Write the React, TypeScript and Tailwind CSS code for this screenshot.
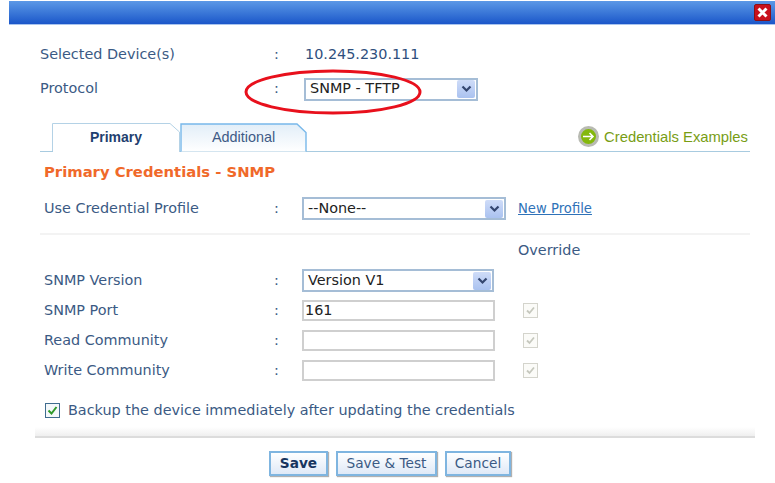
import React from "react";

const Arrow = () => (
  <span className="flex h-[18px] w-[18px] items-center justify-center rounded-[2px] bg-gradient-to-b from-[#cfdcf8] to-[#aac2f0]">
    <svg width="11" height="8" viewBox="0 0 11 8">
      <path d="M1.5 1.5 L5.5 5.5 L9.5 1.5" fill="none" stroke="#34466f" strokeWidth="2.2" />
    </svg>
  </span>
);

const Select = ({ value, className }: { value: string; className: string }) => (
  <div className={`flex h-[23px] items-center justify-between border-2 border-[#a5bdd6] bg-white pl-[4px] pr-[1px] text-[14.4px] text-[#222222] ${className}`}>
    <span>{value}</span>
    <Arrow />
  </div>
);

const Input = ({ value = "" }: { value?: string }) => (
  <div className="flex h-[21px] w-[193px] items-center border-2 border-[#cfcfcf] bg-white pl-[1px] text-[14.4px] text-[#222222]">{value}</div>
);

const Check = () => (
  <span className="flex h-[15px] w-[15px] items-center justify-center border border-[#d4d4cc] bg-[#fbfbf8]">
    <svg width="11" height="11" viewBox="0 0 11 11">
      <path d="M2 5.5 L4.5 8 L9 2.5" fill="none" stroke="#c6c8be" strokeWidth="1.8" />
    </svg>
  </span>
);

const Row = ({ label, children, cls }: { label: string; children: React.ReactNode; cls: string }) => (
  <div className={`flex items-center pl-[44px] ${cls}`}>
    <span className="w-[230px]">{label}</span>
    <span className="w-[28px]">:</span>
    {children}
  </div>
);

export default function App() {
  return (
    <div className="relative h-[483px] w-[775px] overflow-hidden bg-white font-['DejaVu_Sans','Liberation_Sans',sans-serif] text-[14.4px] text-[#3b5a84]">
      <div className="ml-[9px] mt-[1px] flex h-[24px] items-start justify-end border-b border-[#a9c4ee] bg-gradient-to-b from-[#5c98e6] to-[#1b56c9] pr-[4px] pt-[3px]">
        <span className="flex h-[17px] w-[17px] items-center justify-center rounded-[2px] border border-[#8a1015] bg-[#c8101c]">
          <svg width="13" height="13" viewBox="0 0 13 13">
            <path d="M2.5 2.5 L10.5 10.5 M10.5 2.5 L2.5 10.5" stroke="#ffffff" strokeWidth="3" />
          </svg>
        </span>
      </div>

      <div className="flex h-[34px] mt-[13px] items-center pl-[40px]">
        <span className="w-[234px]">Selected Device(s)</span>
        <span className="w-[31px]">:</span>
        <span className="text-[#2f4f7d]">10.245.230.111</span>
      </div>
      <div className="flex h-[34px] items-center pl-[40px]">
        <span className="w-[234px]">Protocol</span>
        <span className="w-[30px]">:</span>
        <Select value="SNMP - TFTP" className="w-[174px]" />
      </div>

      <div className="relative ml-[40px] mt-[17px] flex h-[29px] w-[710px] items-end border-b border-[#a8cbe0] pl-[12px]">
        <div className="relative -mb-px flex h-[29px] w-[128px] items-center justify-center font-['Liberation_Sans',sans-serif] text-[14px] font-bold text-[#1f3f6f]">
          <svg className="absolute inset-0" width="128" height="29" viewBox="0 0 128 29">
            <path d="M0.5 28 V0.5 H118 L127.5 9 V29" fill="#ffffff" stroke="#b4d2e6" />
            <path d="M1 28 H127 V29 H1 Z" fill="#ffffff" />
          </svg>
          <span className="relative">Primary</span>
        </div>
        <div className="relative -mb-px flex h-[29px] w-[127px] items-center justify-center font-['Liberation_Sans',sans-serif] text-[14.4px] text-[#3e5b86]">
          <svg className="absolute inset-0" width="127" height="29" viewBox="0 0 127 29">
            <defs>
              <linearGradient id="tabfill" x1="0" y1="0" x2="0" y2="1">
                <stop offset="0" stopColor="#e2eef8" />
                <stop offset="1" stopColor="#ffffff" />
              </linearGradient>
            </defs>
            <path d="M1 28.5 V1 H117 L126 9.5 V28.5" fill="url(#tabfill)" stroke="#78b8ea" strokeWidth="1.4" />
          </svg>
          <span className="relative">Additional</span>
        </div>
        <div className="mb-[3px] ml-auto flex items-center gap-[5px] pr-[2px] font-['Liberation_Sans',sans-serif] text-[14.8px] text-[#789d14]">
          <span className="flex h-[21px] w-[21px] items-center justify-center rounded-full border-[3px] border-[#b8bab2] bg-[#84b80c]">
            <svg width="13" height="9" viewBox="0 0 13 9">
              <path d="M1 4.5 H11 M7.5 1 L11 4.5 L7.5 8" fill="none" stroke="#ffffff" strokeWidth="1.6" />
            </svg>
          </span>
          <span>Credentials Examples</span>
        </div>
      </div>

      <div className="ml-[44px] mt-[10px] h-[20px] text-[14.8px] font-bold leading-[20px] text-[#f0692a]">Primary Credentials - SNMP</div>

      <Row label="Use Credential Profile" cls="mt-[15px] h-[23px]">
        <Select value="--None--" className="w-[204px]" />
        <span className="ml-[12px] text-[13.2px] text-[#2f72b8] underline">New Profile</span>
      </Row>

      <div className="ml-[40px] mt-[13px] h-[2px] w-[710px] bg-[#f3f3f3]" />

      <div className="ml-[518px] mt-[7px] h-[17px] leading-[17px]">Override</div>

      <Row label="SNMP Version" cls="mt-[10px] h-[23px]">
        <Select value="Version V1" className="w-[192px]" />
      </Row>
      <Row label="SNMP Port" cls="mt-[8px] h-[21px]">
        <Input value="161" />
        <span className="ml-[28px]"><Check /></span>
      </Row>
      <Row label="Read Community" cls="mt-[9px] h-[21px]">
        <Input />
        <span className="ml-[28px]"><Check /></span>
      </Row>
      <Row label="Write Community" cls="mt-[9px] h-[21px]">
        <Input />
        <span className="ml-[28px]"><Check /></span>
      </Row>

      <div className="ml-[45px] mt-[21px] flex h-[17px] items-center gap-[8px]">
        <span className="flex h-[15px] w-[15px] items-center justify-center border border-[#3f6c8f] bg-[#f4f8fa]">
          <svg width="11" height="11" viewBox="0 0 11 11">
            <path d="M1.5 5.5 L4.5 8.5 L9.5 2" fill="none" stroke="#2f9a2a" strokeWidth="2" />
          </svg>
        </span>
        <span>Backup the device immediately after updating the credentials</span>
      </div>

      <div className="ml-[35px] mt-[8px] h-[11px] w-[720px] border-b-2 border-[#dcdcdc] bg-gradient-to-b from-white to-[#efefef]" />

      <div className="ml-[269px] mt-[13px] flex gap-[8px] text-[13.7px]">
        <button className="h-[25px] w-[59px] border-2 border-[#7fb5e0] bg-gradient-to-b from-white to-[#dfe9f7] font-bold text-[#17355f] shadow-[1px_1px_1px_#b0b0b0]">Save</button>
        <button className="h-[25px] w-[101px] border-2 border-[#7fb5e0] bg-gradient-to-b from-white to-[#dfe9f7] text-[#3b5a84] shadow-[1px_1px_1px_#b0b0b0]">Save &amp; Test</button>
        <button className="h-[25px] w-[66px] border-2 border-[#7fb5e0] bg-gradient-to-b from-white to-[#dfe9f7] text-[#3b5a84] shadow-[1px_1px_1px_#b0b0b0]">Cancel</button>
      </div>

      <svg className="pointer-events-none absolute left-[244px] top-[69px]" width="178" height="46" viewBox="0 0 178 46">
        <ellipse cx="89" cy="23" rx="87" ry="21" fill="none" stroke="#e8101c" strokeWidth="3" />
      </svg>
    </div>
  );
}
